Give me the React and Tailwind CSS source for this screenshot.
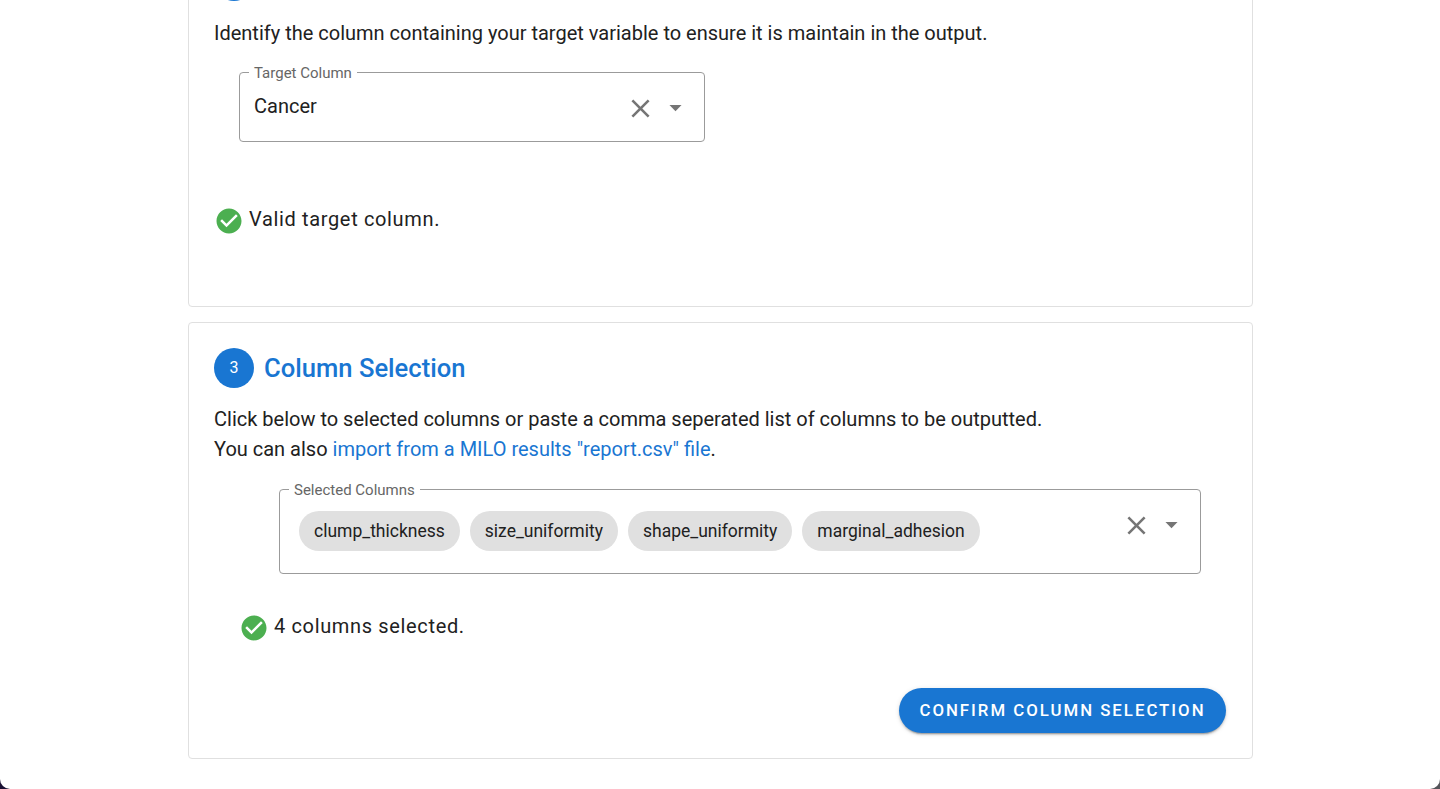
const font = { fontFamily: 'Roboto, sans-serif' }

function CloseIcon() {
  return (
    <svg viewBox="0 0 24 24" className="h-[31px] w-[31px] fill-[#757575]">
      <path d="M19 6.41 17.59 5 12 10.59 6.41 5 5 6.41 10.59 12 5 17.59 6.41 19 12 13.41 17.59 19 19 17.59 13.41 12z" />
    </svg>
  )
}

function ArrowIcon() {
  return (
    <svg viewBox="0 0 24 24" className="-mt-[2px] h-[29px] w-[29px] fill-[#757575]">
      <path d="m7 10 5 5 5-5z" />
    </svg>
  )
}

function CheckCircle() {
  return (
    <svg viewBox="0 0 24 24" className="h-[30px] w-[30px] shrink-0 fill-[#4caf50]">
      <path d="M12 2C6.48 2 2 6.48 2 12s4.48 10 10 10 10-4.48 10-10S17.52 2 12 2zm-2 15-5-5 1.41-1.41L10 14.17l7.59-7.59L19 8l-9 9z" />
    </svg>
  )
}

function Status({ children, className }) {
  return (
    <div className={`flex items-center gap-[5px] text-[20px] leading-[27px] tracking-[0.65px] text-[#212121] ${className}`}>
      <CheckCircle />
      <span className="-mt-[4px]">{children}</span>
    </div>
  )
}

function SelectBox({ label, className, children, iconsClass }) {
  return (
    <fieldset className={`relative rounded-[4px] border border-[#9b9b9b] px-[9px] ${className}`}>
      <legend className="translate-y-[1px] px-[5px] text-[15px] leading-[10px] text-[#666666]">{label}</legend>
      <div className="-mt-[5px] flex items-start justify-between pl-[5px]">
        <div className="min-w-0 flex-1">{children}</div>
        <div className={`flex items-center ${iconsClass}`}>
          <CloseIcon />
          <ArrowIcon />
        </div>
      </div>
    </fieldset>
  )
}

function Chip({ children }) {
  return (
    <span className="flex h-[40px] items-center rounded-full bg-[#e0e0e0] px-[15px] text-[17.5px] text-[#212121]">
      {children}
    </span>
  )
}

export default function App() {
  const chips = ['clump_thickness', 'size_uniformity', 'shape_uniformity', 'marginal_adhesion']

  return (
    <div style={font} className="h-[789px] overflow-hidden bg-gradient-to-r from-[#1a1033] to-[#55555a]">
      <div className="h-full overflow-hidden rounded-b-[10px] bg-white">
        <main className="-mt-[66px] ml-[188px] flex w-[1065px] flex-col gap-[15px]">
          {/* step 2, scrolled mostly out of view */}
          <section className="h-[373px] rounded-[4px] border border-[#e0e0e0] px-[25px] pt-[26px]">
            <div className="h-[40px] w-[40px] rounded-full bg-[#1976d2]" />
            <p className="mt-[17px] text-[20px] leading-[30px] text-[#212121]">
              Identify the column containing your target variable to ensure it is maintain in the output.
            </p>
            <SelectBox label="Target Column" className="ml-[25px] mt-[19px] h-[75px] w-[466px]" iconsClass="mt-[21px] mr-[5px] gap-[5.5px]">
              <div className="pt-[19px] text-[20px] leading-[30px] text-[#212121]">Cancer</div>
            </SelectBox>
            <Status className="mt-[64px]">Valid target column.</Status>
          </section>

          {/* step 3 */}
          <section className="h-[437px] rounded-[4px] border border-[#e0e0e0] px-[25px] pt-[25px]">
            <div className="flex items-center gap-[10px]">
              <div className="flex h-[40px] w-[40px] items-center justify-center rounded-full bg-[#1976d2] text-[16px] text-white">
                3
              </div>
              <h2 className="pt-[1px] text-[25.6px] font-medium text-[#1976d2]">Column Selection</h2>
            </div>
            <p className="mt-[16px] text-[20px] leading-[30px] text-[#212121]">
              Click below to selected columns or paste a comma seperated list of columns to be outputted.
              <br />
              You can also <a className="text-[#1976d2]">import from a MILO results "report.csv" file</a>.
            </p>
            <SelectBox label="Selected Columns" className="ml-[65px] mt-[20px] h-[90px] w-[922px]" iconsClass="mt-[21px] mr-[5px] gap-[5.5px]">
              <div className="flex gap-[10px] pl-[5px] pt-[22px]">
                {chips.map((c) => (
                  <Chip key={c}>{c}</Chip>
                ))}
              </div>
            </SelectBox>
            <Status className="ml-[25px] mt-[39px]">4 columns selected.</Status>
            <div className="mt-[45px] flex justify-end">
              <button
                type="button"
                className="mr-[1px] h-[45px] w-[327px] rounded-full bg-[#1976d2] text-[16.8px] font-medium uppercase tracking-[2px] text-white shadow-[0_3px_1px_-2px_rgba(0,0,0,0.2),0_2px_2px_0_rgba(0,0,0,0.14),0_1px_5px_0_rgba(0,0,0,0.12)]"
              >
                Confirm Column Selection
              </button>
            </div>
          </section>
        </main>
      </div>
    </div>
  )
}
